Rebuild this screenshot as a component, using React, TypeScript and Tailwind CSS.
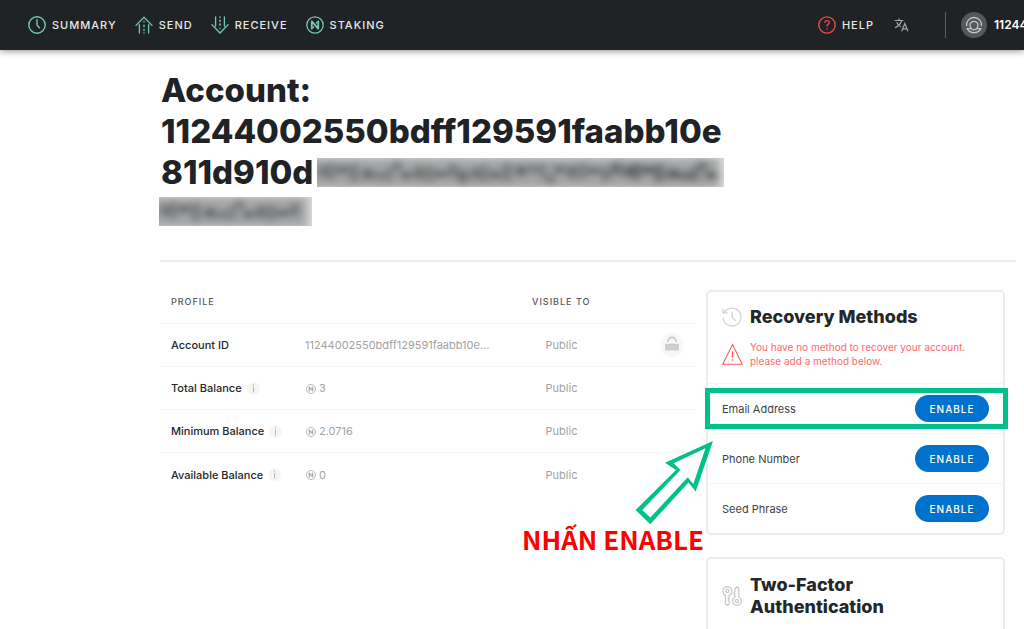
import type { ReactNode } from "react";

type IconProps = { className?: string };

function ClockIcon() {
  return (
    <svg className="size-[18px]" viewBox="0 0 18 18" fill="none" stroke="#72c7b2" strokeWidth="1.4" strokeLinecap="round">
      <circle cx="9" cy="9" r="8.2" />
      <path d="M9 3.6V9l2.4 2.8" />
    </svg>
  );
}

function SendIcon() {
  return (
    <svg className="size-[18px]" viewBox="0 0 18 18" fill="none" stroke="#72c7b2" strokeWidth="1.3" strokeLinecap="round" strokeLinejoin="round">
      <path d="M1 9.4 9 1.2l8 8.2" />
      <path d="M4.4 17V8.6M13.6 17V8.6" />
      <path d="M9 5.6v.1M9 9.2v1.2M9 13.4v1.2M9 16.9v.1" strokeWidth="1.5" />
    </svg>
  );
}

function ReceiveIcon() {
  return (
    <svg className="size-[18px]" viewBox="0 0 18 18" fill="none" stroke="#72c7b2" strokeWidth="1.3" strokeLinecap="round" strokeLinejoin="round">
      <path d="M1 8.8 9 17l8-8.2" />
      <path d="M4.6 1v9M13.4 1v9" />
      <path d="M9 1.1v.1M9 4.2v1M9 8v1M9 12.2v.1" strokeWidth="1.6" />
    </svg>
  );
}

function NearIcon({ className }: IconProps) {
  return (
    <svg className={className} viewBox="0 0 18 18" fill="none" stroke="currentColor" strokeLinecap="round" strokeLinejoin="round">
      <circle cx="9" cy="9" r="8.2" strokeWidth="1.3" />
      <path d="M5.8 12.6V5.4l6.4 7.2V5.4" strokeWidth="1.9" />
      <path d="M5.8 12.6 7.8 11M12.2 5.4 10.200 7" strokeWidth="1.2" />
    </svg>
  );
}

function HelpIcon() {
  return (
    <svg className="size-[18px]" viewBox="0 0 18 18" fill="none" stroke="#f0494c" strokeWidth="1.3" strokeLinecap="round" strokeLinejoin="round">
      <circle cx="9" cy="9" r="8.2" />
      <path d="M6.8 6.4C7 5.3 7.9 4.7 9 4.7c1.300 0 2.300.7 2.300 1.900 0 1.500-2.300 1.600-2.300 3.500M9 12.900v.1" />
    </svg>
  );
}

function TranslateIcon() {
  return (
    <svg className="h-[14px] w-[15px]" viewBox="0 0 15 14" fill="none" stroke="#a4a7a9" strokeWidth="1.200">
      <path d="M.6 2.500h8.800M5 .6v1.900M7.600 2.500C6.900 5.600 4.300 8.300 1 9.800M2.600 4.300c1.100 2.200 2.700 3.700 4.600 4.800" />
      <path d="M7.700 13.200 10.800 5.500l3.100 7.700M8.700 10.800h4.200" />
    </svg>
  );
}

function AvatarIcon() {
  return (
    <svg className="size-[26px]" viewBox="0 0 26 26" fill="none" stroke="#c3c4c5" strokeWidth="1.300">
      <circle cx="13" cy="13" r="13" fill="#555759" stroke="none" />
      <path d="M5.600 14.200A7.500 7.500 0 1 1 20.400 14.200" />
      <path d="M10.300 16.300a4 4 0 1 1 5.400 0" />
      <path d="M6.200 16.600h3.500c2 1.500 4.600 1.500 6.600 0h3.500a7.700 7.700 0 0 1-13.600 0Z" />
    </svg>
  );
}

function InfoIcon() {
  return (
    <svg className="size-[13px]" viewBox="0 0 13 13">
      <circle cx="6.500" cy="6.500" r="6.500" fill="#f5f5f5" />
      <path d="M6.500 2.300v1.400M6.500 4.800v5.600" stroke="#b2b3b4" strokeWidth="1" />
    </svg>
  );
}

function UnlockIcon() {
  return (
    <svg className="ml-auto size-6" viewBox="0 0 24 24" fill="none">
      <circle cx="12" cy="12" r="12" fill="#f8f8f8" />
      <path d="M5 10.700h14V17.500H5z" fill="#cdcdcd" />
      <path d="M8 9V8.500a4 4 0 0 1 8 0V9" stroke="#cdcdcd" strokeWidth="1.900" />
    </svg>
  );
}

function HistoryIcon() {
  return (
    <svg className="size-5" viewBox="0 0 20 20" fill="none" stroke="#cfcfcf" strokeWidth="1.200" strokeLinecap="round" strokeLinejoin="round">
      <path d="M2.300 5.400A9 9 0 1 1 1.100 11" />
      <path d="M1 2v3.800h4.200M10.200 5v5.200l3.300 3.300" />
    </svg>
  );
}

function WarningIcon() {
  return (
    <svg className="h-[22px] w-[21px]" viewBox="0 0 21 22" fill="none" stroke="#ff585d" strokeWidth="1.100">
      <path d="M10.500 1.400 20.300 21.300H.7Z" />
      <path d="M10.500 8.500v6M10.500 16.300v1.500" strokeWidth="1.400" />
    </svg>
  );
}

function KeysIcon() {
  return (
    <svg className="size-5" viewBox="0 0 20 20" fill="none" stroke="#cbcbcb" strokeWidth="1.300" strokeLinejoin="round">
      <path d="M3.400 9.300a4.500 4.500 0 1 1 3.900 0v1.500l-1.200 1.100 1.200 1.200-1.200 1.200 1.200 1.200v2.100l-2 1.900-1.900-1.900Z" />
      <circle cx="5.300" cy="5" r="1.600" />
      <path d="M13 11V9.700l-1.100-1.100 1.100-1.100-1.100-1.100L13 5.300V2.500L14.900.7l1.900 1.800V11a4.400 4.400 0 1 1-3.800 0Z" />
      <circle cx="14.900" cy="14.900" r="1.600" />
    </svg>
  );
}

const STROKES = [
  [2, 8, 7, 12], [12, 5, 5, 18], [21, 8, 9, 9], [34, 6, 6, 19], [46, 11, 10, 11], [60, 14, 6, 9],
  [70, 10, 5, 14], [77, 4, 7, 8], [84, 14, 10, 8], [98, 9, 8, 13], [110, 8, 5, 17], [118, 13, 12, 7],
  [133, 6, 6, 14], [142, 12, 8, 14],
];

function Redaction({ id, className, width }: { id: string; className: string; width: number }) {
  const strokes = STROKES.concat(STROKES.map(([x, y, w, h]) => [x + 153, 30 - y - h, w, h]), STROKES.map(([x, y, w, h]) => [x + 304, y, w + 2, h]));
  return (
    <svg className={className} viewBox={`0 0 ${width} 30`} preserveAspectRatio="none" aria-hidden="true">
      <defs>
        <filter id={id} x="-5%" y="-40%" width="110%" height="180%">
          <feGaussianBlur stdDeviation="4" />
        </filter>
      </defs>
      <rect width={width} height="30" fill="#dedede" />
      <g filter={`url(#${id})`}>
        <rect x="-10" y="0" width={width + 6} height="32" fill="#a6a7a8" />
        {strokes
          .filter(([x, , w]) => x + w < width - 5)
          .map(([x, y, w, h]) => (
            <rect key={x} x={x} y={y} width={w} height={h} fill="#54565a" />
          ))}
      </g>
    </svg>
  );
}

function NavLink({ icon, children }: { icon: ReactNode; children: ReactNode }) {
  return (
    <a href="#" className="flex items-center gap-[6px] text-[11px] font-medium tracking-[1px] text-[#e8e8e8]">
      {icon}
      <span>{children}</span>
    </a>
  );
}

const balances = [
  { label: "Total Balance", value: "3" },
  { label: "Minimum Balance", value: "2.0716" },
  { label: "Available Balance", value: "0" },
];

const methods = ["Email Address", "Phone Number", "Seed Phrase"];

export default function App() {
  return (
    <div className="h-screen overflow-hidden bg-white font-['Inter',sans-serif] text-[#24272a]">
      <header className="relative flex h-[50px] items-center bg-[#1f2326] pl-7 shadow-[0_1px_7px_rgba(0,0,0,0.45)]">
        <nav className="flex items-center gap-[18px] whitespace-nowrap">
          <NavLink icon={<ClockIcon />}>SUMMARY</NavLink>
          <NavLink icon={<SendIcon />}>SEND</NavLink>
          <NavLink icon={<ReceiveIcon />}>RECEIVE</NavLink>
          <NavLink icon={<NearIcon className="size-[18px] text-[#72c7b2]" />}>STAKING</NavLink>
        </nav>
        <div className="ml-auto flex items-center whitespace-nowrap">
          <NavLink icon={<HelpIcon />}>HELP</NavLink>
          <button type="button" aria-label="Language" className="ml-5">
            <TranslateIcon />
          </button>
          <span className="ml-9 h-[26px] w-px bg-[#5b5e60]" />
          <button type="button" className="ml-[15px] flex w-[63px] items-center gap-[7px] overflow-hidden text-[12px] font-semibold text-white">
            <span className="shrink-0">
              <AvatarIcon />
            </span>
            <span>11244002</span>
          </button>
        </div>
      </header>

      <main className="pl-40 pr-2 pt-5">
        <div className="border-b-2 border-[#ececec] pb-[30px]">
          <h1 className="pl-px text-[33px] font-extrabold leading-[41px] text-[#1f2326]">
            Account:
            <br />
            11244002550bdff129591faabb10e
            <br />
            <span className="flex items-center gap-1">
              811d910d
              <Redaction id="soft-a" className="h-[29px] w-[407px]" width={407} />
            </span>
            <span className="-ml-0.5 flex h-[37px] items-center">
              <Redaction id="soft-b" className="h-[29px] w-[153px]" width={153} />
            </span>
          </h1>
        </div>

        <div className="flex items-start gap-[11px] pr-[11px] pt-[18px]">
          <table className="min-w-0 flex-1 table-fixed text-left text-[11px]">
            <colgroup>
              <col className="w-[135px]" />
              <col />
              <col className="w-[79px]" />
              <col className="w-[94px]" />
            </colgroup>
            <thead>
              <tr className="h-[43px] text-[9px] tracking-[1px] text-[#55585a]">
                <th colSpan={2} className="pl-[11px] font-medium">PROFILE</th>
                <th className="whitespace-nowrap pl-2.5 font-medium">VISIBLE TO</th>
                <th />
              </tr>
            </thead>
            <tbody>
              <tr className="h-[43px] border-t border-[#f4f4f4]">
                <th className="pl-[11px] pt-0.5 font-medium">Account ID</th>
                <td className="pl-2.5 pt-0.5 text-[#a2a2a2]">11244002550bdff129591faabb10e...</td>
                <td className="pt-0.5 text-center text-[#a2a2a2]">Public</td>
                <td className="pr-[11px]">
                  <UnlockIcon />
                </td>
              </tr>
              {balances.map((row) => (
                <tr key={row.label} className="h-[43px] border-t border-[#f4f4f4]">
                  <th className="whitespace-nowrap pl-[11px] pt-0.5 font-medium">
                    <span className="flex items-center gap-[5px]">
                      {row.label}
                      <InfoIcon />
                    </span>
                  </th>
                  <td className="pl-[11px] pt-0.5 text-[#a2a2a2]">
                    <span className="flex items-center gap-[3px]">
                      <NearIcon className="size-2.5" />
                      {row.value}
                    </span>
                  </td>
                  <td className="pt-0.5 text-center text-[#a2a2a2]">Public</td>
                  <td />
                </tr>
              ))}
            </tbody>
          </table>

          <div className="relative w-[299px] shrink-0 pt-[10px]">
            <section className="rounded-[5px] border-2 border-[#ececec]">
              <div className="grid h-[91px] grid-cols-[20px_1fr] content-start items-center gap-x-2 gap-y-3 pl-3.5 pt-3.5">
                <HistoryIcon />
                <h2 className="text-[18px] font-extrabold leading-[22px]">Recovery Methods</h2>
                <WarningIcon />
                <p className="text-[10px] leading-[14px] text-[#ff686d]">
                  You have no method to recover your account.
                  <br />
                  please add a method below.
                </p>
              </div>
              <ul>
                {methods.map((method, index) => (
                  <li key={method} className="relative flex h-[50px] items-center justify-between border-t border-[#f4f4f4] px-3.5 text-[11px] text-[#3f4245]">
                    <span className="pt-0.5">{method}</span>
                    <button type="button" className="h-[27px] w-[74px] rounded-full bg-[#0072ce] pt-0.5 text-[10px] font-medium tracking-[1px] text-white">
                      ENABLE
                    </button>
                    {index === 0 && (
                      <span className="pointer-events-none absolute -left-[3px] -right-[5px] top-1 h-[41px] border-[5px] border-[#00c08b]" />
                    )}
                  </li>
                ))}
              </ul>
            </section>

            <section className="mt-[22px] rounded-[5px] border-2 border-[#ececec] pb-10 pl-3.5 pt-[15px]">
              <div className="grid grid-cols-[20px_1fr] items-center gap-x-2">
                <KeysIcon />
                <h2 className="text-[18px] font-extrabold leading-[22px]">
                  Two-Factor
                  <br />
                  Authentication
                </h2>
              </div>
            </section>

            <svg className="pointer-events-none absolute -left-[71px] top-[160px] h-[86px] w-[80px]" viewBox="635 440 80 86" aria-hidden="true">
              <path
                fillRule="evenodd"
                fill="#00c08b"
                d="M713 441 665 462.700 676 470 635.600 510 650.300 524.300 688.500 482.500 695.700 491.500ZM705.500 448.300 673.700 463.300 680.500 470 642.300 510 650.300 517.600 687.700 477.300 693.300 484Z"
              />
            </svg>
            <p className="absolute -left-[184px] top-[241px] whitespace-nowrap font-['Noto_Sans_CJK_SC','Noto_Sans',sans-serif] text-[26px] font-bold leading-9 text-[#ff0000]">
              NHẤN ENABLE
            </p>
          </div>
        </div>
      </main>
    </div>
  );
}
